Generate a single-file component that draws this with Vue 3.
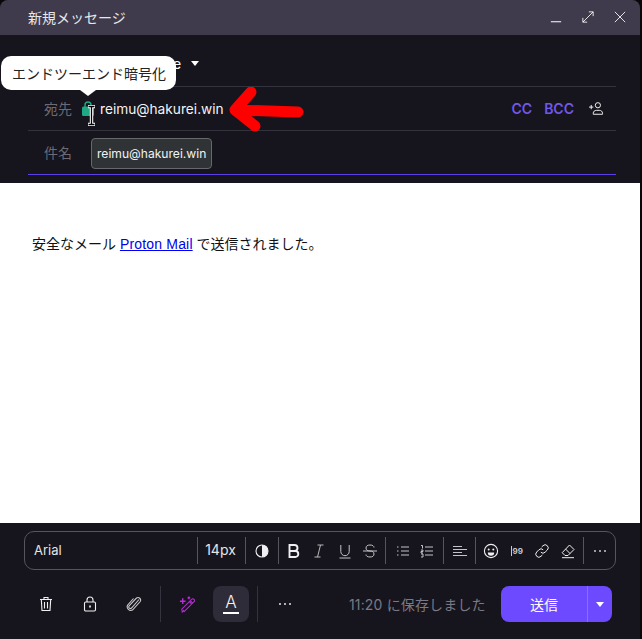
<script setup>
const stroke = { fill: 'none', stroke: 'currentColor', 'stroke-width': 1 }
</script>

<template>
  <div class="window">
    <header class="titlebar">
      <span class="title">新規メッセージ</span>
      <div class="win-actions">
        <svg class="win-icon" viewBox="0 0 14 14" v-bind="stroke"><path d="M1 12.5h12" stroke-width="1.3" /></svg>
        <svg class="win-icon" viewBox="0 0 14 14" v-bind="stroke"><path d="M1 13 13 1M8 1h5v5M1 8v5h5" /></svg>
        <svg class="win-icon" viewBox="0 0 14 14" v-bind="stroke"><path d="M1 1l12 12M13 1 1 13" /></svg>
      </div>
    </header>

    <section class="fields">
      <div class="from-row">
        <span class="from-text">e</span>
        <span class="caret"></span>
      </div>
      <div class="to-row">
        <span class="label">宛先</span>
        <svg class="lock" viewBox="0 0 12 15">
          <path d="M3 6V4a3 3 0 0 1 6 0v2" fill="none" stroke="#1ea885" stroke-width="1.4" />
          <rect x="0" y="5.5" width="12" height="9.5" rx="1.5" fill="#1ea885" />
        </svg>
        <span class="recipient">reimu@hakurei.win</span>
        <div class="to-actions">
          <span class="link-btn">CC</span>
          <span class="link-btn">BCC</span>
          <svg class="add-user" viewBox="0 0 16 14" fill="none" stroke="currentColor" stroke-width="1">
            <circle cx="9.5" cy="3.5" r="2.8" />
            <path d="M4.5 13.2v-1c0-2 1.5-3.2 3.5-3.2h3c2 0 3.5 1.2 3.5 3.2v1z" />
            <path d="M0 5.5h4.6M2.3 3.2v4.6" />
          </svg>
        </div>
      </div>
      <div class="subject-row">
        <span class="label">件名</span>
        <span class="chip">reimu@hakurei.win</span>
      </div>

      <div class="tooltip">エンドツーエンド暗号化</div>
      <svg class="ibeam" viewBox="0 0 9 21">
        <path d="M1 1.5h7M4.5 1.5v18M1 19.5h7" fill="none" stroke="#fff" stroke-width="3.4" />
        <path d="M1.5 1.5h6M4.5 1.5v18M1.5 19.5h6" fill="none" stroke="#000" stroke-width="1.3" />
      </svg>
      <svg class="red-arrow" viewBox="0 0 80 46">
        <path d="M25 5 9 23 M9 23 29 39 M9 23 72 25" fill="none" stroke="#fe0000" stroke-width="11" stroke-linecap="round" stroke-linejoin="round" />
      </svg>
    </section>

    <main class="editor">
      <p class="mail-body">安全なメール <a href="#" class="mail-link">Proton Mail</a> で送信されました。</p>
    </main>

    <section class="toolbar">
      <div class="tool-font">Arial</div>
      <div class="tool-size">14px</div>
      <div class="tool-group contrast">
        <svg class="tool-icon" viewBox="0 0 16 16"><circle cx="8" cy="8" r="6" fill="none" stroke="currentColor" stroke-width="1.1" /><path d="M8 2a6 6 0 0 1 0 12z" fill="currentColor" /></svg>
      </div>
      <div class="tool-group format">
        <svg class="tool-icon" viewBox="0 0 16 16" fill="none" stroke="currentColor" stroke-width="1.9"><path d="M3.500 2h5a3 3 0 0 1 0 6h-5zM3.500 8h5.800a3 3 0 0 1 0 6H3.500z" /></svg>
        <svg class="tool-icon" viewBox="0 0 16 16" fill="none" stroke="#b8b8bc" stroke-width="1"><path d="M6.500 2h6M3.500 14h6M9.500 2l-3 12" /></svg>
        <svg class="tool-icon" viewBox="0 0 16 16" fill="none" stroke="#c4c4c8" stroke-width="1"><path d="M3.800 2v6.500a4.200 4.200 0 0 0 8.400 0V2M2.500 15h11" /></svg>
        <svg class="tool-icon" viewBox="0 0 16 16" fill="none" stroke="#c4c4c8" stroke-width="1"><path d="M12 4.500c0-1.500-1.500-2.500-4-2.500S4 3 4 5s1.500 3 4 3 4 1 4 3-1.500 3-4 3-4-1-4-2.500M1 8h14" /></svg>
      </div>
      <div class="tool-group lists">
        <svg class="tool-icon" viewBox="0 0 16 16" fill="none" stroke="#c4c4c8" stroke-width="1"><path d="M6 4h8M6 8h8M6 12h8M2 4h1.500M2 8h1.500M2 12h1.500" /></svg>
        <svg class="tool-icon" viewBox="0 0 16 16" fill="none" stroke="#c4c4c8" stroke-width="1"><path d="M6 4h8M6 8h8M6 12h8M2 2.500h1.500v3M2 7h2v1.500H2V10h2M2 11h2v3H2" /></svg>
      </div>
      <div class="tool-group align">
        <svg class="tool-icon" viewBox="0 0 16 16" fill="none" stroke="#c4c4c8" stroke-width="1"><path d="M1 3.500h9M1 6.500h14M1 9.500h9M1 12.500h14" /></svg>
      </div>
      <div class="tool-group misc">
        <svg class="tool-icon" viewBox="0 0 16 16" fill="none" stroke="currentColor" stroke-width="1.100"><circle cx="8" cy="8" r="6.600" /><circle cx="5.700" cy="6.400" r="1" fill="currentColor" stroke="none" /><circle cx="10.300" cy="6.400" r="1" fill="currentColor" stroke="none" /><path d="M4.800 9.500h6.400a3.200 3.200 0 0 1-6.400 0z" fill="currentColor" stroke="none" /></svg>
        <span class="quote-icon"><i></i>99</span>
        <svg class="tool-icon" viewBox="0 0 16 16" fill="none" stroke="currentColor" stroke-width="1"><path d="M6.800 9.200a3 3 0 0 0 4.300 0l2.200-2.200a3 3 0 0 0-4.300-4.300L7.600 4M9.200 6.800a3 3 0 0 0-4.300 0L2.700 9a3 3 0 0 0 4.300 4.300L8.400 12" /></svg>
        <svg class="tool-icon" viewBox="0 0 16 16" fill="none" stroke="currentColor" stroke-width="1"><path d="M9.500 2 14 6.500 8 12.500H5L2.200 9.700zM5.500 6 10 10.500M2 14.700h12" /></svg>
      </div>
      <div class="tool-group more">
        <svg class="tool-icon" viewBox="0 0 16 16" fill="#c9c9cd"><circle cx="3" cy="8" r="1" /><circle cx="8" cy="8" r="1" /><circle cx="13" cy="8" r="1" /></svg>
      </div>
    </section>

    <footer class="actions">
      <div class="action-icons">
        <svg class="act-icon" viewBox="0 0 16 16" fill="none" stroke="currentColor" stroke-width="1.100"><path d="M2 3.500h12M6 3.500V1.500h4v2M3.300 3.500l.7 11h8l.7-11M6.500 6v6.500M9.500 6v6.500" /></svg>
        <svg class="act-icon" viewBox="0 0 16 16" fill="none" stroke="currentColor" stroke-width="1.100"><rect x="2.500" y="6" width="11" height="9" rx="1.200" /><path d="M5 6V4a3 3 0 0 1 6 0v2" /><path d="M8 9.500v2" stroke-width="1.700" /></svg>
        <svg class="act-icon" viewBox="0 0 16 16" fill="none" stroke="#c9c9cd" stroke-width="1.100"><path d="M13 3.500 5.500 12a1.600 1.600 0 0 1-2.400-2.100L10.500 2a2.600 2.600 0 0 1 3.700 3.500L6.500 14a3.700 3.700 0 0 1-5-4.800L7.500 2.500" /></svg>
      </div>
      <div class="action-sep"></div>
      <svg class="wand" viewBox="0 0 18 18" fill="none" stroke="#b92ed6" stroke-width="1.100">
        <path d="M6 15.500 4.500 17l-.5-3L13 5l2.500 2.500-9 9zM12 6l2.500 2.500M13.500 4.500l1-1a1 1 0 0 1 2.500 2.500l-1 1" />
        <path d="M5 2.500v6M2 5.500h6M11.500.5v3M10 2h3" stroke-width="1.500" />
      </svg>
      <div class="font-color">
        <span class="a-letter">A</span>
        <span class="a-bar"></span>
      </div>
      <div class="action-sep second"></div>
      <svg class="act-icon dots" viewBox="0 0 16 16" fill="#e4e4e7"><circle cx="3" cy="8" r="1" /><circle cx="8" cy="8" r="1" /><circle cx="13" cy="8" r="1" /></svg>
      <span class="saved">11:20 に保存しました</span>
      <div class="send">
        <span class="send-label">送信</span>
        <span class="send-more"><span class="send-caret"></span></span>
      </div>
    </footer>
  </div>
</template>

<style>
body {
  background: #08080b;
}
</style>

<style scoped>
.window {
  width: 640px;
  height: 639px;
  display: flex;
  flex-direction: column;
  background: #16141c;
  border-radius: 8px 8px 0 0;
  overflow: hidden;
  font-family: Inter, "Noto Sans CJK JP", sans-serif;
  color: #fff;
}
.titlebar {
  flex: none;
  height: 35px;
  display: flex;
  align-items: center;
  justify-content: space-between;
  padding: 0 14px 2px 28px;
  box-sizing: border-box;
  background: #3f3b4c;
}
.title {
  font-size: 14px;
  color: #e8e8ea;
}
.win-actions {
  display: flex;
  gap: 20px;
}
.win-icon {
  width: 12px;
  height: 12px;
}
.fields {
  flex: none;
  position: relative;
  height: 148px;
  margin: 0 24px 0 28px;
}
.from-row {
  height: 52px;
  box-sizing: border-box;
  padding: 20px 0 0 145px;
  display: flex;
  align-items: center;
  border-bottom: 1px solid #34323c;
  font-size: 14px;
}
.from-text {
  position: relative;
  top: -7px;
}
.caret {
  margin-left: 10px;
  position: relative;
  top: -7px;
  border: 4px solid transparent;
  border-top: 5px solid #fff;
  border-bottom: 0;
}
.to-row {
  height: 44px;
  display: flex;
  align-items: center;
  box-sizing: border-box;
  border-bottom: 1px solid #34323c;
}
.subject-row {
  height: 44px;
  display: flex;
  align-items: center;
  box-sizing: border-box;
  border-bottom: 1px solid #5b3fe8;
}
.label {
  width: 54px;
  flex: none;
  padding-left: 16px;
  box-sizing: border-box;
  margin-bottom: 2px;
  font-size: 14px;
  color: #6c6a75;
}
.subject-row .label {
  width: 63px;
}
.lock {
  width: 12px;
  height: 15px;
  margin-right: 6px;
  flex: none;
}
.recipient {
  font-size: 13.7px;
  color: #f2f2f4;
}
.to-actions {
  margin-left: auto;
  display: flex;
  align-items: center;
  padding-right: 12px;
}
.link-btn {
  font-size: 14px;
  font-weight: 600;
  color: #6e58ee;
  margin-right: 12px;
}
.link-btn + .link-btn {
  margin-right: 15px;
}
.add-user {
  width: 15px;
  height: 13px;
}
.chip {
  height: 31px;
  margin-top: 1px;
  box-sizing: border-box;
  padding: 0 5px;
  display: flex;
  align-items: center;
  border: 1px solid #66686b;
  border-radius: 4px;
  background: #2f3336;
  font-size: 12.1px;
  color: #f2f2f4;
}
.tooltip {
  position: absolute;
  left: -27px;
  top: 21px;
  width: 175px;
  height: 34px;
  padding-left: 1px;
  box-sizing: border-box;
  border-radius: 10px;
  background: #fff;
  color: #222;
  font-size: 14px;
  display: flex;
  align-items: center;
  justify-content: center;
}
.tooltip::after {
  content: "";
  position: absolute;
  left: 79px;
  top: 34px;
  border: 8px solid transparent;
  border-top: 6px solid #fff;
  border-bottom: 0;
}
.ibeam {
  position: absolute;
  left: 59px;
  top: 70px;
  width: 9px;
  height: 21px;
}
.red-arrow {
  position: absolute;
  left: 198px;
  top: 52px;
  width: 80px;
  height: 46px;
}
.editor {
  flex: none;
  height: 340px;
  background: #fff;
  overflow: hidden;
}
.mail-body {
  margin: 53px 0 0 32px;
  font-family: "Liberation Sans", "Noto Sans CJK JP", sans-serif;
  font-size: 14px;
  line-height: 17px;
  color: #111;
}
.mail-link {
  color: #0000ee;
  text-decoration: underline;
  letter-spacing: 0.18px;
}
.toolbar {
  flex: none;
  height: 39px;
  margin: 8px 24px 0;
  box-sizing: border-box;
  display: flex;
  align-items: center;
  border: 1px solid #56545f;
  border-radius: 10px;
}
.tool-font {
  flex: 1;
  padding: 0 0 2px 9px;
  font-size: 13px;
  color: #e4e4e7;
}
.tool-size,
.tool-group {
  height: 27px;
  display: flex;
  align-items: center;
  justify-content: center;
  border-left: 1px solid #56545f;
  box-sizing: border-box;
  flex: none;
}
.tool-size {
  width: 48px;
  padding: 0 2px 2px 0;
  font-size: 14px;
  color: #e4e4e7;
}
.contrast {
  width: 33px;
}
.format {
  width: 107px;
  gap: 9.3px;
}
.lists {
  width: 58px;
  gap: 8px;
}
.align {
  width: 32px;
}
.misc {
  width: 108px;
  gap: 9.6px;
}
.more {
  width: 32px;
}
.tool-icon {
  width: 16px;
  height: 16px;
  color: #f0f0f2;
  flex: none;
}
.quote-icon {
  width: 16px;
  display: flex;
  align-items: center;
  justify-content: center;
  gap: 1px;
  font-size: 8px;
  font-weight: 700;
  color: #c9c9cd;
}
.quote-icon i {
  width: 1px;
  height: 10px;
  background: #c9c9cd;
  flex: none;
}
.actions {
  flex: none;
  display: flex;
  align-items: center;
  height: 36px;
  margin-top: 16px;
  padding: 0 28px 0 38px;
}
.action-icons {
  display: flex;
  gap: 28px;
}
.act-icon {
  width: 16px;
  height: 16px;
  color: #f0f0f2;
  flex: none;
}
.action-sep {
  width: 1px;
  height: 36px;
  margin-left: 18px;
  background: #34323c;
  flex: none;
}
.action-sep.second {
  margin-left: 8px;
}
.wand {
  width: 17px;
  height: 17px;
  margin-left: 17px;
  flex: none;
}
.font-color {
  width: 36px;
  height: 36px;
  margin-left: 18px;
  border-radius: 8px;
  background: #2e2c38;
  display: flex;
  flex-direction: column;
  align-items: center;
  justify-content: center;
  flex: none;
}
.a-letter {
  font-size: 17px;
  font-weight: 300;
  line-height: 17px;
  color: #f2f2f4;
}
.a-bar {
  width: 16px;
  height: 1.5px;
  margin-top: 1px;
  background: #fff;
}
.dots {
  margin-left: 19px;
}
.saved {
  margin-left: 56px;
  font-size: 14px;
  letter-spacing: 0.15px;
  color: #7b7985;
  white-space: nowrap;
}
.send {
  margin-left: auto;
  width: 111px;
  height: 36px;
  display: flex;
  border-radius: 8px;
  background: #6d4aff;
  flex: none;
}
.send-label {
  width: 86px;
  display: flex;
  align-items: center;
  justify-content: center;
  font-size: 14px;
  color: #fff;
  border-right: 1px solid #8a6fff;
}
.send-more {
  flex: 1;
  display: flex;
  align-items: center;
  justify-content: center;
}
.send-caret {
  border: 4px solid transparent;
  border-top: 5px solid #fff;
  border-bottom: 0;
}
</style>
